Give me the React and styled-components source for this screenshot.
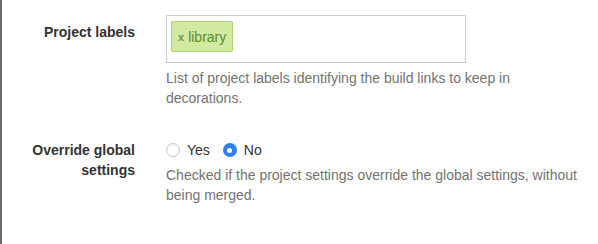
import React, { useState } from 'react'
import styled, { createGlobalStyle } from 'styled-components'

const GlobalStyle = createGlobalStyle`
  html, body {
    margin: 0;
    padding: 0;
    background: #fff;
  }
  body {
    font-family: "Liberation Sans", Arial, sans-serif;
    font-size: 14px;
    line-height: 20px;
    color: #333;
  }
`

const Panel = styled.div`
  box-sizing: border-box;
  height: 244px;
  border-left: 2px solid #6b6b6b;
  padding-top: 15px;
`

const FormRow = styled.div`
  display: grid;
  grid-template-columns: 133px 420px;
  column-gap: 31px;
  margin-bottom: ${p => p.$gap || 0}px;
`

const Label = styled.label`
  text-align: right;
  font-weight: bold;
  padding-top: ${p => p.$top || 0}px;
`

const Field = styled.div`
  display: flex;
  flex-direction: column;
`

const TagBox = styled.div`
  box-sizing: border-box;
  width: 300px;
  height: 48px;
  border: 1px solid #ccc;
  padding: 5px 4px;
  display: flex;
  align-items: flex-start;
`

const Tag = styled.span`
  box-sizing: border-box;
  height: 31px;
  display: inline-flex;
  align-items: center;
  gap: 4px;
  padding: 0 6px 0 6px;
  background: #d2e9a2;
  border: 1px solid #acd46c;
  border-radius: 2px;
  color: #5e8c1e;
  font-size: 14px;
`

const Remove = styled.span`
  font-size: 11px;
  font-weight: bold;
  color: #6f9b2c;
`

const Help = styled.p`
  margin: ${p => p.$top || 0}px 0 0;
  color: #737373;
`

const Radios = styled.div`
  display: flex;
  align-items: center;
  height: 20px;
  margin-top: 7px;
  gap: 13px;
`

const RadioOption = styled.label`
  display: inline-flex;
  align-items: center;
  gap: 7px;
  cursor: pointer;
  color: #333;
`

const RadioDot = styled.span`
  box-sizing: border-box;
  width: 14px;
  height: 14px;
  border-radius: 50%;
  border: ${p => (p.$on ? 'none' : '1px solid #c8c8c8')};
  background: ${p => (p.$on ? '#2f7ff0' : '#fff')};
  box-shadow: ${p => (p.$on ? 'none' : 'inset 0 1px 1px rgba(0,0,0,0.08)')};
  display: inline-flex;
  align-items: center;
  justify-content: center;
  &::after {
    content: '';
    width: 5px;
    height: 5px;
    border-radius: 50%;
    background: #fff;
    display: ${p => (p.$on ? 'block' : 'none')};
  }
`

const App = () => {
  const [override, setOverride] = useState(false)

  return (
    <>
      <GlobalStyle />
      <Panel>
        <FormRow $gap={25}>
          <Label $top={7}>Project labels</Label>
          <Field>
            <TagBox>
              <Tag><Remove>x</Remove>library</Tag>
            </TagBox>
            <Help $top={5}>List of project labels identifying the build links to keep in decorations.</Help>
          </Field>
        </FormRow>
        <FormRow>
          <Label $top={7}>Override global settings</Label>
          <Field>
            <Radios>
              <RadioOption onClick={() => setOverride(true)}>
                <RadioDot $on={override} />Yes
              </RadioOption>
              <RadioOption onClick={() => setOverride(false)}>
                <RadioDot $on={!override} />No
              </RadioOption>
            </Radios>
            <Help $top={5}>Checked if the project settings override the global settings, without being merged.</Help>
          </Field>
        </FormRow>
      </Panel>
    </>
  )
}

export default App
